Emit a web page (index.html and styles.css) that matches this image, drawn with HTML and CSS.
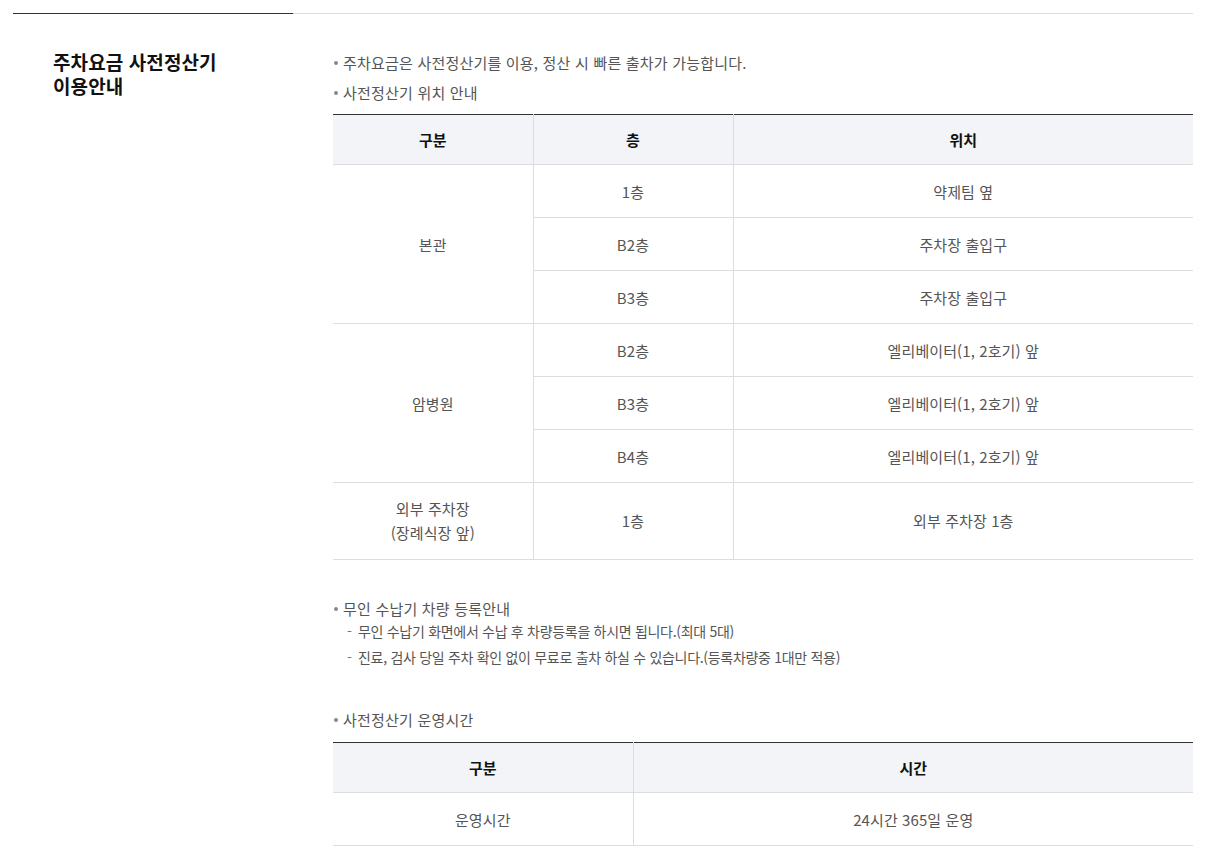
FILE: index.html
```html
<!DOCTYPE html>
<html lang="ko">
<head>
<meta charset="utf-8">
<link rel="stylesheet" href="styles.css">
</head>
<body>
<div class="page">
  <section class="sect">
    <div class="side">
      <h2 class="title"><span class="tl">주차요금 사전정산기</span><span class="tl">이용안내</span></h2>
    </div>
    <div class="main">
      <ul class="bul">
        <li>주차요금은 사전정산기를 이용, 정산 시 빠른 출차가 가능합니다.</li>
        <li>사전정산기 위치 안내</li>
      </ul>
      <table class="tbl t1">
        <colgroup><col class="c1"><col class="c2"><col></colgroup>
        <thead>
          <tr><th>구분</th><th>층</th><th>위치</th></tr>
        </thead>
        <tbody>
          <tr><td rowspan="3" class="grp">본관</td><td>1층</td><td>약제팀 옆</td></tr>
          <tr><td>B2층</td><td>주차장 출입구</td></tr>
          <tr><td>B3층</td><td>주차장 출입구</td></tr>
          <tr><td rowspan="3" class="grp">암병원</td><td>B2층</td><td>엘리베이터(1, 2호기) 앞</td></tr>
          <tr><td>B3층</td><td>엘리베이터(1, 2호기) 앞</td></tr>
          <tr><td>B4층</td><td>엘리베이터(1, 2호기) 앞</td></tr>
          <tr class="tall"><td class="grp">외부 주차장<br>(장례식장 앞)</td><td>1층</td><td>외부 주차장 1층</td></tr>
        </tbody>
      </table>

      <ul class="bul b2">
        <li>무인 수납기 차량 등록안내
          <ul class="sub">
            <li>무인 수납기 화면에서 수납 후 차량등록을 하시면 됩니다.(최대 5대)</li>
            <li>진료, 검사 당일 주차 확인 없이 무료로 출차 하실 수 있습니다.(등록차량중 1대만 적용)</li>
          </ul>
        </li>
      </ul>

      <ul class="bul b3">
        <li>사전정산기 운영시간</li>
      </ul>
      <table class="tbl t2">
        <colgroup><col class="c3"><col></colgroup>
        <thead>
          <tr><th>구분</th><th>시간</th></tr>
        </thead>
        <tbody>
          <tr><td>운영시간</td><td>24시간 365일 운영</td></tr>
        </tbody>
      </table>
    </div>
  </section>
</div>
</body>
</html>
```

FILE: styles.css
```css
* { box-sizing: border-box; }
html, body {
  margin: 0;
  padding: 0;
  background: #fff;
}
body {
  font-family: "Noto Sans CJK KR", "Noto Sans", sans-serif;
  color: #555;
}
.page {
  padding: 13px 13px 0 13px;
}
.sect {
  display: flex;
  width: 1180px;
}
.side {
  width: 280px;
  flex: none;
  border-top: 1px solid #333;
  padding: 36px 0 0 40px;
}
.title {
  margin: 0;
  font-size: 19px;
  line-height: 24px;
  font-weight: 700;
  color: #111;
  letter-spacing: 0.1px;
}
.tl {
  display: block;
}
.main {
  flex: 1;
  border-top: 1px solid #ddd;
  padding: 37px 0 0 40px;
}
.bul {
  list-style: none;
  margin: 0;
  padding: 0;
}
.bul > li {
  position: relative;
  padding-left: 10px;
  font-size: 15px;
  line-height: 24px;
  margin-bottom: 6px;
  color: #555;
  letter-spacing: 0.2px;
}
.bul > li::before {
  content: "";
  position: absolute;
  left: 1px;
  top: 10px;
  width: 4px;
  height: 4px;
  border-radius: 50%;
  background: #888;
}
.bul > li:last-child { margin-bottom: 9px; }
.b2 { margin-top: 37px; }
.b3 { margin-top: 41px; }
.b3 > li:last-child { margin-bottom: 10px; }
.b2 > li { margin-bottom: 0; }
.b2 > li:last-child { margin-bottom: 0; }
.sub {
  list-style: none;
  margin: 0;
  padding: 0 0 0 4px;
}
.sub li {
  position: relative;
  padding-left: 11px;
  font-size: 14px;
  line-height: 20px;
  margin-top: 0;
  color: #555;
  letter-spacing: -0.3px;
}
.sub li + li { margin-top: 6px; }
.sub li::before {
  content: "-";
  position: absolute;
  left: 0;
  top: 0;
  color: #777;
}
.tbl {
  width: 860px;
  border-collapse: collapse;
  table-layout: fixed;
  border-top: 1px solid #333;
}
.c1, .c2 { width: 200px; }
.c3 { width: 300px; }
.tbl th {
  height: 50px;
  background: #f3f4f7;
  color: #111;
  font-weight: 700;
  font-size: 15px;
  border-bottom: 1px solid #ddd;
  border-left: 1px solid #ddd;
  padding: 0;
}
.tbl td {
  height: 53px;
  text-align: center;
  font-size: 15px;
  color: #555;
  border-bottom: 1px solid #ddd;
  border-left: 1px solid #ddd;
  padding: 0;
  letter-spacing: 0.1px;
}
.tbl th:first-child,
.tbl td.grp,
.t2 td:first-child {
  border-left: none;
}
.tbl tr.tall td {
  height: 77px;
  line-height: 24px;
}
```
